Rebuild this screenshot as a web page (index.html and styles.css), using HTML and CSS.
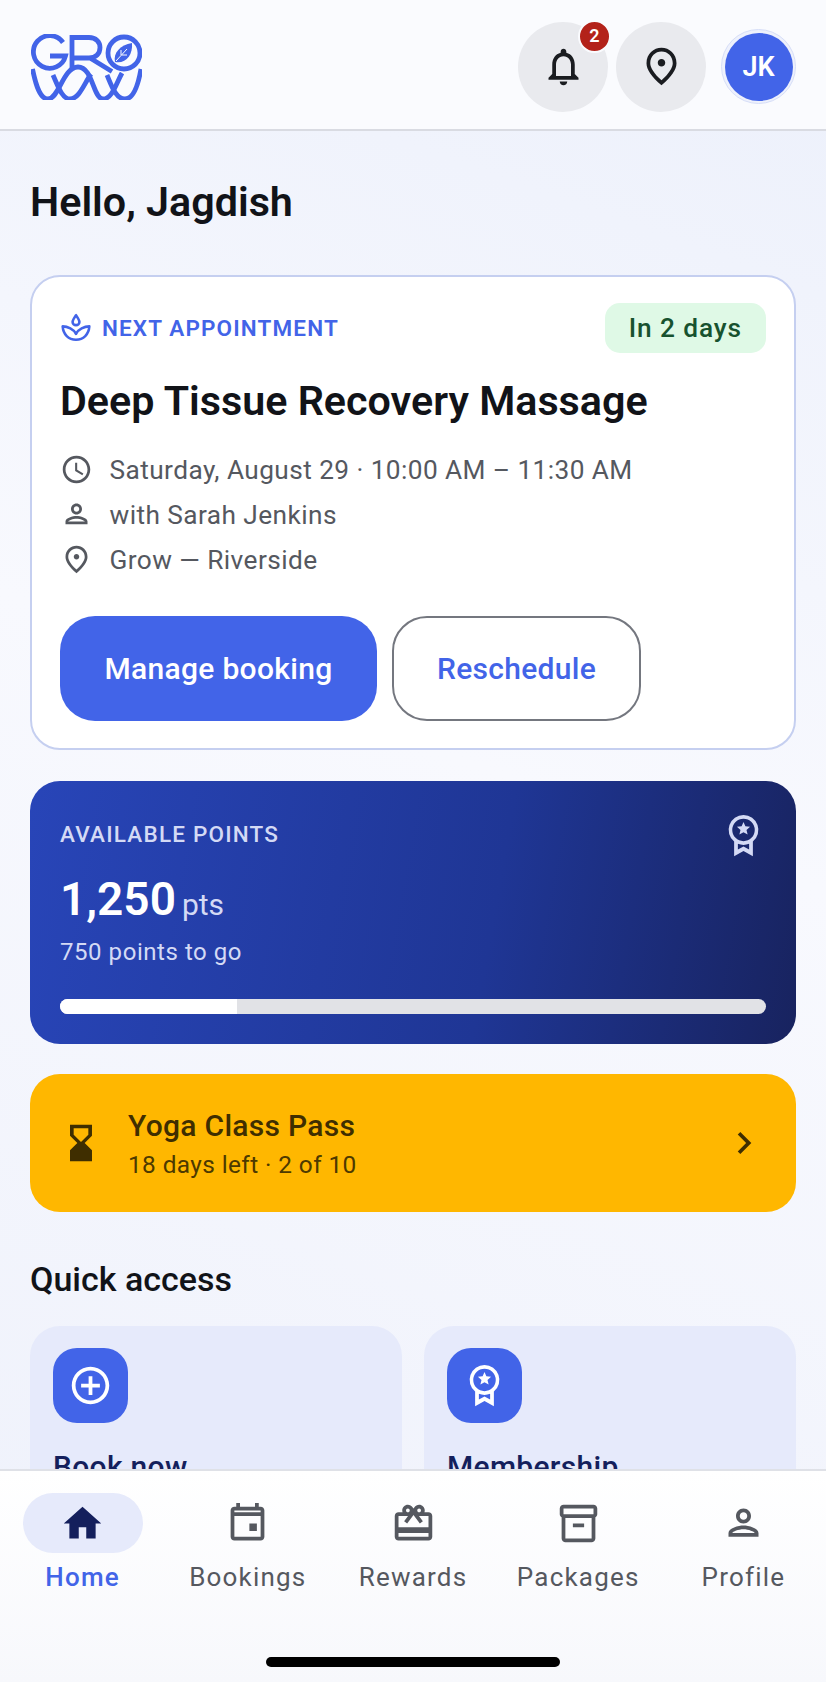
FILE: index.html
```html
<!DOCTYPE html>
<html lang="en">
<head>
    <meta charset="UTF-8">
    <title>Grow</title>
    <link rel="stylesheet" href="styles.css">
</head>
<body>
<div class="app">
    <header class="top">
        <svg class="logo" viewBox="0 0 111 66" fill="none" stroke="#4264e8" stroke-width="4.800">
            <path d="M32 8.500A16.300 16.300 0 1 0 34.500 22H19"/>
            <path d="M41 36V3.500H58C65 3.500 69 8 69 13.500C69 19.500 65 24 58 24H43M59 24L81 37.500"/>
            <circle cx="93" cy="19" r="16"/>
            <path d="M1.500 35C5 52 9 65 17 65C28 65 32 33 47 33C62 33 62 65 72 65C81 65 85 50 91 39"/>
            <path d="M22 41C27 52 31 65 39 65C48 65 53 50 60 40"/>
            <path d="M76 41C81 53 85 65 94 65C102 65 107 52 110 35"/>
            <path d="M84 28C82 19 89 11 101 9C102 21 95 30 84 28Z" fill="#4264e8" stroke="none"/>
            <path d="M85 27L96 15M90 21V16M90.500 21H96" stroke="#fafbfe" stroke-width="1"/>
        </svg>
        <div class="top-actions">
            <div class="round-btn">
                <svg class="icon-45" viewBox="0 0 24 24"><path d="M12 22c1.100 0 2-.9 2-2h-4c0 1.100.9 2 2 2zm6-6v-5c0-3.070-1.630-5.640-4.500-6.320V4c0-.83-.67-1.500-1.500-1.500s-1.500.67-1.500 1.500v.68C7.640 5.360 6 7.920 6 11v5l-2 2v1h16v-1l-2-2zm-2 1H8v-6c0-2.480 1.510-4.500 4-4.500s4 2.020 4 4.500v6z"/></svg>
                <span class="badge">2</span>
            </div>
            <div class="round-btn">
                <svg class="icon-45" viewBox="0 0 24 24"><path d="M12 12c-1.100 0-2-.9-2-2s.9-2 2-2 2 .9 2 2-.9 2-2 2zm6-1.800C18 6.570 15.350 4 12 4s-6 2.570-6 6.200c0 2.340 1.950 5.440 6 9.140 4.050-3.700 6-6.800 6-9.140zM12 2c4.200 0 8 3.220 8 8.200 0 3.320-2.670 7.250-8 11.800-5.330-4.550-8-8.480-8-11.800C4 5.220 7.800 2 12 2z"/></svg>
            </div>
            <div class="avatar"><span>JK</span></div>
        </div>
    </header>

    <main class="content">
        <h1 class="hello">Hello, Jagdish</h1>

        <section class="appt">
            <div class="appt-head">
                <div class="appt-tag">
                    <svg class="icon-32" viewBox="0 0 30 30" fill="none" stroke="#4264e8" stroke-width="2.400" stroke-linejoin="round">
                        <path d="M15 3C13 6 11.800 7.500 11.800 9.300C11.800 11 13.200 12.300 15 12.300C16.800 12.300 18.200 11 18.200 9.300C18.200 7.500 17 6 15 3Z"/>
                        <path d="M2.500 13.500C7 13.500 13 16 15 20.500C17 16 23 13.500 27.500 13.500C27 21 22 26 15 26C8 26 3 21 2.500 13.500Z"/>
                    </svg>
                    <span>NEXT APPOINTMENT</span>
                </div>
                <span class="days">In 2 days</span>
            </div>
            <h2 class="appt-title">Deep Tissue Recovery Massage</h2>
            <ul class="appt-info">
                <li>
                    <svg class="icon-33" viewBox="0 0 24 24"><path d="M11.990 2C6.470 2 2 6.480 2 12s4.470 10 9.990 10C17.520 22 22 17.520 22 12S17.520 2 11.990 2zM12 20c-4.420 0-8-3.580-8-8s3.580-8 8-8 8 3.580 8 8-3.580 8-8 8zm.5-13H11v6l5.250 3.150.75-1.230-4.500-2.670z"/></svg>
                    <span>Saturday, August 29 · 10:00 AM – 11:30 AM</span>
                </li>
                <li>
                    <svg class="icon-33" viewBox="0 0 24 24"><path d="M12 6c1.100 0 2 .9 2 2s-.9 2-2 2-2-.9-2-2 .9-2 2-2m0 9c2.700 0 5.800 1.290 6 2H6c.23-.72 3.310-2 6-2m0-11C9.790 4 8 5.790 8 8s1.790 4 4 4 4-1.790 4-4-1.790-4-4-4zm0 9c-2.670 0-8 1.340-8 4v2h16v-2c0-2.660-5.330-4-8-4z"/></svg>
                    <span>with Sarah Jenkins</span>
                </li>
                <li>
                    <svg class="icon-33" viewBox="0 0 24 24"><path d="M12 12c-1.100 0-2-.9-2-2s.9-2 2-2 2 .9 2 2-.9 2-2 2zm6-1.800C18 6.570 15.350 4 12 4s-6 2.570-6 6.200c0 2.340 1.950 5.440 6 9.140 4.050-3.700 6-6.800 6-9.140zM12 2c4.200 0 8 3.220 8 8.200 0 3.320-2.670 7.250-8 11.800-5.330-4.550-8-8.480-8-11.800C4 5.220 7.800 2 12 2z"/></svg>
                    <span>Grow — Riverside</span>
                </li>
            </ul>
            <div class="appt-btns">
                <a class="btn btn-main">Manage booking</a>
                <a class="btn btn-line">Reschedule</a>
            </div>
        </section>

        <section class="points">
            <div class="points-head">
                <span class="points-label">AVAILABLE POINTS</span>
                <svg class="medal-big" viewBox="0 0 24 24"><use href="#medal"/></svg>
            </div>
            <div class="points-num">1,250 <small>pts</small></div>
            <div class="points-left">750 points to go</div>
            <div class="bar"><div class="bar-fill" style="width:25%"></div></div>
        </section>

        <section class="pass">
            <svg class="icon-44 pass-icon" viewBox="0 0 24 24"><path d="M18 22l-.01-6L14 12l3.990-4.010L18 2H6v6l4 4-4 3.990V22h12zM8 7.500V4h8v3.500l-4 4-4-4z"/></svg>
            <div class="pass-text">
                <div class="pass-name">Yoga Class Pass</div>
                <div class="pass-sub">18 days left · 2 of 10</div>
            </div>
            <svg class="icon-44 pass-arrow" viewBox="0 0 24 24"><path d="M8.590 16.590 13.170 12 8.590 7.410 10 6l6 6-6 6z"/></svg>
        </section>

        <h3 class="quick-title">Quick access</h3>
        <div class="quick-grid">
            <div class="quick-card">
                <div class="quick-icon">
                    <svg class="icon-45" viewBox="0 0 24 24"><path d="M13 7h-2v4H7v2h4v4h2v-4h4v-2h-4V7zm-1-5C6.480 2 2 6.480 2 12s4.480 10 10 10 10-4.480 10-10S17.520 2 12 2zm0 18c-4.410 0-8-3.590-8-8s3.590-8 8-8 8 3.590 8 8-3.590 8-8 8z"/></svg>
                </div>
                <div class="quick-name">Book now</div>
            </div>
            <div class="quick-card">
                <div class="quick-icon">
                    <svg class="icon-45" viewBox="0 0 24 24"><use href="#medal"/></svg>
                </div>
                <div class="quick-name">Membership</div>
            </div>
        </div>
    </main>

    <nav class="tabs">
        <div class="tab tab-on">
            <div class="tab-pill">
                <svg class="icon-45" viewBox="0 0 24 24"><path d="M10 20v-6h4v6h5v-8h3L12 3 2 12h3v8z"/></svg>
            </div>
            <span>Home</span>
        </div>
        <div class="tab">
            <div class="tab-pill">
                <svg class="icon-45" viewBox="0 0 24 24"><path d="M19 3h-1V1h-2v2H8V1H6v2H5c-1.100 0-2 .9-2 2v14c0 1.100.9 2 2 2h14c1.100 0 2-.9 2-2V5c0-1.100-.9-2-2-2zm0 16H5V8h14v11zM5 6V5h14v1H5zm8 6h4v4h-4v-4z"/></svg>
            </div>
            <span>Bookings</span>
        </div>
        <div class="tab">
            <div class="tab-pill">
                <svg class="icon-45" viewBox="0 0 24 24"><path d="M20 6h-2.180c.11-.31.180-.65.180-1 0-1.660-1.340-3-3-3-1.050 0-1.960.54-2.500 1.350l-.5.670-.5-.68C10.960 2.540 10.050 2 9 2 7.340 2 6 3.340 6 5c0 .35.070.69.180 1H4c-1.110 0-1.990.89-1.990 2L2 19c0 1.110.89 2 2 2h16c1.110 0 2-.89 2-2V8c0-1.110-.89-2-2-2zm-5-2c.55 0 1 .45 1 1s-.45 1-1 1-1-.45-1-1 .45-1 1-1zM9 4c.55 0 1 .45 1 1s-.45 1-1 1-1-.45-1-1 .45-1 1-1zm11 15H4v-2h16v2zm0-5H4V8h5.080L7 10.830 8.620 12 12 7.400l3.380 4.600L17 10.830 14.920 8H20v6z"/></svg>
            </div>
            <span>Rewards</span>
        </div>
        <div class="tab">
            <div class="tab-pill">
                <svg class="icon-45" viewBox="0 0 24 24"><path d="M20 2H4c-1 0-2 .9-2 2v3.010c0 .72.430 1.340 1 1.690V20c0 1.100 1.100 2 2 2h14c.9 0 2-.9 2-2V8.700c.57-.35 1-.97 1-1.690V4c0-1.100-1-2-2-2zm-1 18H5V9h14v11zm1-13H4V4h16v3z"/><path d="M9 12h6v2H9z"/></svg>
            </div>
            <span>Packages</span>
        </div>
        <div class="tab">
            <div class="tab-pill">
                <svg class="icon-45" viewBox="0 0 24 24"><path d="M12 6c1.100 0 2 .9 2 2s-.9 2-2 2-2-.9-2-2 .9-2 2-2m0 9c2.700 0 5.800 1.290 6 2H6c.23-.72 3.310-2 6-2m0-11C9.790 4 8 5.790 8 8s1.790 4 4 4 4-1.790 4-4-1.790-4-4-4zm0 9c-2.670 0-8 1.340-8 4v2h16v-2c0-2.660-5.330-4-8-4z"/></svg>
            </div>
            <span>Profile</span>
        </div>
    </nav>
    <div class="home-line"></div>
</div>

<svg class="defs" width="0" height="0">
    <symbol id="medal" viewBox="0 0 24 24">
        <path fill-rule="evenodd" d="M12 1a8 8 0 0 1 5 14.200V23l-5-2.800L7 23v-7.800A8 8 0 0 1 12 1zm0 2a6 6 0 1 0 0 12 6 6 0 0 0 0-12zm3 13.400A8 8 0 0 1 12 17a8 8 0 0 1-3 -.6V19.500l3-1.600 3 1.600z"/>
        <path d="M12 4.800l1 2.300 2.500.2-1.900 1.700.6 2.500-2.200-1.300-2.200 1.300.6-2.500-1.900-1.700 2.500-.2z"/>
    </symbol>
</svg>
</body>
</html>
```

FILE: styles.css
```css
*{
    margin: 0;
    padding: 0;
    box-sizing: border-box;
}
html,body{
    height: 100%;
}
body{
    font-family: Roboto, "Liberation Sans", sans-serif;
    color: #111318;
    overflow: hidden;
}
.defs{
    position: absolute;
}
.app{
    width: 826px;
    height: 1682px;
    display: flex;
    flex-direction: column;
    position: relative;
    overflow: hidden;
    background: linear-gradient(200deg, #ecf0fb 0%, #f8f9fe 45%, #eef1fb 100%);
}
.icon-32{
    width: 32px;
    height: 32px;
    flex: none;
}
.icon-33{
    width: 33px;
    height: 33px;
    flex: none;
}
.icon-44{
    width: 44px;
    height: 44px;
    flex: none;
}
.icon-45{
    width: 45px;
    height: 45px;
    flex: none;
}

/* top bar */
.top{
    height: 131px;
    flex: none;
    display: flex;
    align-items: center;
    justify-content: space-between;
    padding: 4px 30px 0 31px;
    background: #fafbfe;
    border-bottom: 2px solid #d9dbe2;
}
.logo{
    width: 111px;
    height: 66px;
}
.top-actions{
    display: flex;
    align-items: center;
    gap: 8px;
}
.round-btn{
    width: 90px;
    height: 90px;
    border-radius: 50%;
    background: #e9eaee;
    display: flex;
    align-items: center;
    justify-content: center;
    position: relative;
}
.round-btn svg{
    fill: #1a1c20;
}
.badge{
    position: absolute;
    top: -2px;
    right: -3px;
    width: 33px;
    height: 33px;
    border-radius: 50%;
    background: #b3221a;
    border: 2px solid #fafbfe;
    color: #fff;
    font-size: 18px;
    font-weight: 600;
    text-align: center;
    line-height: 28px;
}
.avatar{
    width: 75px;
    height: 75px;
    margin-left: 7px;
    border-radius: 50%;
    border: 1px solid #d6def8;
    background: #eef1fc;
    display: flex;
    align-items: center;
    justify-content: center;
}
.avatar span{
    width: 68px;
    height: 68px;
    border-radius: 50%;
    background: #4264e8;
    color: #fff;
    font-size: 27px;
    font-weight: 600;
    text-align: center;
    line-height: 68px;
}

/* content */
.content{
    flex: 1;
    min-height: 0;
    overflow: hidden;
    padding: 46px 30px 0;
}
.hello{
    font-size: 41.250px;
    line-height: 50px;
    font-weight: 650;
    margin-bottom: 48px;
}
.appt{
    height: 475px;
    background: #fff;
    border: 2px solid #c5cff0;
    border-radius: 30px;
    padding: 26px 28px 0;
    margin-bottom: 31px;
}
.appt-head{
    display: flex;
    align-items: center;
    justify-content: space-between;
    height: 50px;
    margin-bottom: 23px;
}
.appt-tag{
    display: flex;
    align-items: center;
    gap: 10px;
    color: #4264e8;
    font-size: 22.500px;
    font-weight: 600;
    letter-spacing: 1.125px;
}
.days{
    height: 50px;
    line-height: 51px;
    padding: 0 24px;
    border-radius: 15px;
    background: #dff9e6;
    color: #17522f;
    font-size: 26.250px;
    font-weight: 500;
    letter-spacing: .9px;
}
.appt-title{
    font-size: 41.250px;
    line-height: 50px;
    font-weight: 650;
    margin-bottom: 21px;
}
.appt-info{
    list-style: none;
}
.appt-info li{
    display: flex;
    align-items: center;
    gap: 16.500px;
    height: 45px;
    color: #55585f;
    font-size: 26.250px;
    letter-spacing: .42px;
}
.appt-info svg{
    fill: #55585f;
}
.appt-btns{
    display: flex;
    gap: 15px;
    margin-top: 34px;
}
.btn{
    height: 105px;
    border-radius: 35px;
    display: flex;
    align-items: center;
    justify-content: center;
    font-size: 30px;
    font-weight: 500;
    letter-spacing: .3px;
}
.btn-main{
    width: 317px;
    background: #4264e8;
    color: #fff;
}
.btn-line{
    width: 249px;
    background: #fff;
    border: 2px solid #74777f;
    color: #4264e8;
}

/* points */
.points{
    height: 263px;
    border-radius: 30px;
    padding: 30px 30px 0;
    margin-bottom: 30px;
    color: #fff;
    background: linear-gradient(100deg, #2845b8 0%, #1f3695 60%, #18235f 100%);
}
.points-head{
    display: flex;
    justify-content: space-between;
    align-items: flex-start;
    height: 36px;
}
.points-label{
    font-size: 22.500px;
    line-height: 46px;
    font-weight: 500;
    letter-spacing: 1.200px;
    color: #d4daf5;
}
.medal-big{
    width: 45px;
    height: 45px;
    fill: #d4daf5;
    margin-top: 2px;
}
.points-num{
    display: flex;
    align-items: baseline;
    gap: 6px;
    font-size: 46px;
    font-weight: 600;
    line-height: 56px;
    margin-top: 24px;
}
.points-num small{
    font-size: 30px;
    font-weight: 400;
    color: #d4daf5;
}
.points-left{
    font-size: 24px;
    line-height: 32px;
    letter-spacing: .55px;
    color: #d4daf5;
    margin-top: 3px;
}
.bar{
    height: 15px;
    margin-top: 31px;
    border-radius: 8px;
    background: #e1e2e6;
    overflow: hidden;
}
.bar-fill{
    height: 100%;
    background: #fff;
}

/* pass */
.pass{
    height: 138px;
    border-radius: 30px;
    background: #ffb700;
    color: #3f2e00;
    display: flex;
    align-items: center;
    padding: 0 30px 0 29px;
    margin-bottom: 45px;
}
.pass-icon{
    fill: #3f2e00;
}
.pass-text{
    flex: 1;
    margin-left: 25px;
    padding-top: 4px;
}
.pass-name{
    font-size: 30px;
    font-weight: 500;
    line-height: 40px;
    letter-spacing: .3px;
}
.pass-sub{
    font-size: 24.400px;
    line-height: 38px;
    letter-spacing: .4px;
    color: #4d3a00;
}
.pass-arrow{
    fill: #3f2e00;
}

/* quick access */
.quick-title{
    font-size: 34px;
    line-height: 44px;
    font-weight: 500;
    margin-bottom: 25px;
}
.quick-grid{
    display: grid;
    grid-template-columns: 1fr 1fr;
    gap: 22px;
}
.quick-card{
    height: 200px;
    border-radius: 30px;
    background: #e6eafb;
    padding: 22px 23px;
}
.quick-icon{
    width: 75px;
    height: 75px;
    border-radius: 24px;
    background: #4264e8;
    fill: #fff;
    display: flex;
    align-items: center;
    justify-content: center;
}
.quick-name{
    margin-top: 26px;
    font-size: 30px;
    font-weight: 500;
    letter-spacing: .3px;
    color: #141f5c;
}

/* bottom nav */
.tabs{
    height: 213px;
    flex: none;
    display: flex;
    justify-content: space-between;
    padding: 22px 0 0;
    background: linear-gradient(180deg, #fff, #f7f8fc);
    border-top: 2px solid #dfe1e7;
}
.tab{
    width: 165.200px;
    display: flex;
    flex-direction: column;
    align-items: center;
    color: #55585f;
    font-size: 26px;
    letter-spacing: 1.200px;
}
.tab span{
    margin-top: 3px;
    line-height: 42px;
}
.tab-pill{
    width: 120px;
    height: 60px;
    border-radius: 30px;
    display: flex;
    align-items: center;
    justify-content: center;
}
.tab-pill svg{
    fill: #55585f;
}
.tab-on{
    color: #4264e8;
    font-weight: 500;
}
.tab-on .tab-pill{
    background: #e6eafb;
}
.tab-on .tab-pill svg{
    fill: #141f5c;
}
.home-line{
    position: absolute;
    left: 266px;
    bottom: 15px;
    width: 294px;
    height: 10px;
    border-radius: 5px;
    background: #000;
}
```
